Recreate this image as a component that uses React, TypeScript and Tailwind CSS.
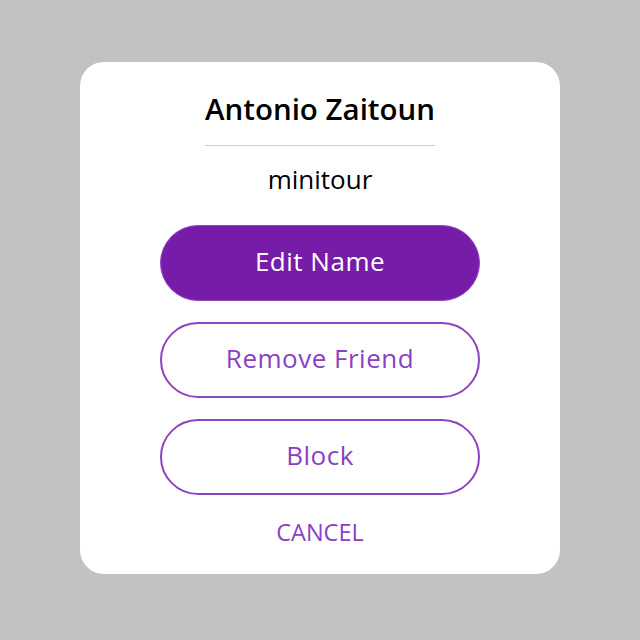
import React from "react";

export default function App() {
  return (
    <div
      className="w-[640px] h-[640px] bg-[#c2c2c2] flex items-center justify-center"
      style={{ fontFamily: "'Open Sans', 'Noto Sans', sans-serif" }}
    >
      <div className="w-[480px] h-[512px] mt-[-4px] bg-white rounded-[24px] flex flex-col items-center pt-[26px]">
        {/* Header */}
        <div className="flex flex-col items-stretch">
          <h1 className="text-[29.5px] font-semibold text-black leading-[42px] text-center">Antonio Zaitoun</h1>
          <div className="h-px bg-[#cfcfcf] mt-[15px]" />
        </div>
        <p className="text-[26px] text-black leading-[32px] mt-[17px]">minitour</p>

        {/* Actions */}
        <div className="flex flex-col gap-[21px] mt-[30px]">
          <button className="w-[320px] h-[76px] pb-[3px] rounded-full bg-[#761ca8] border border-[#9049c4] text-white text-[26px] tracking-[0.5px]">
            Edit Name
          </button>
          <button className="w-[320px] h-[76px] pb-[3px] rounded-full bg-white border-2 border-[#8c44c4] text-[#8b3fc4] text-[26px] tracking-[0.5px]">
            Remove Friend
          </button>
          <button className="w-[320px] h-[76px] pb-[3px] rounded-full bg-white border-2 border-[#8c44c4] text-[#8b3fc4] text-[26px] tracking-[0.5px]">
            Block
          </button>
        </div>
        <button className="mt-[22px] text-[23.5px] text-[#8b3fc4] leading-[30px]">CANCEL</button>
      </div>
    </div>
  );
}
